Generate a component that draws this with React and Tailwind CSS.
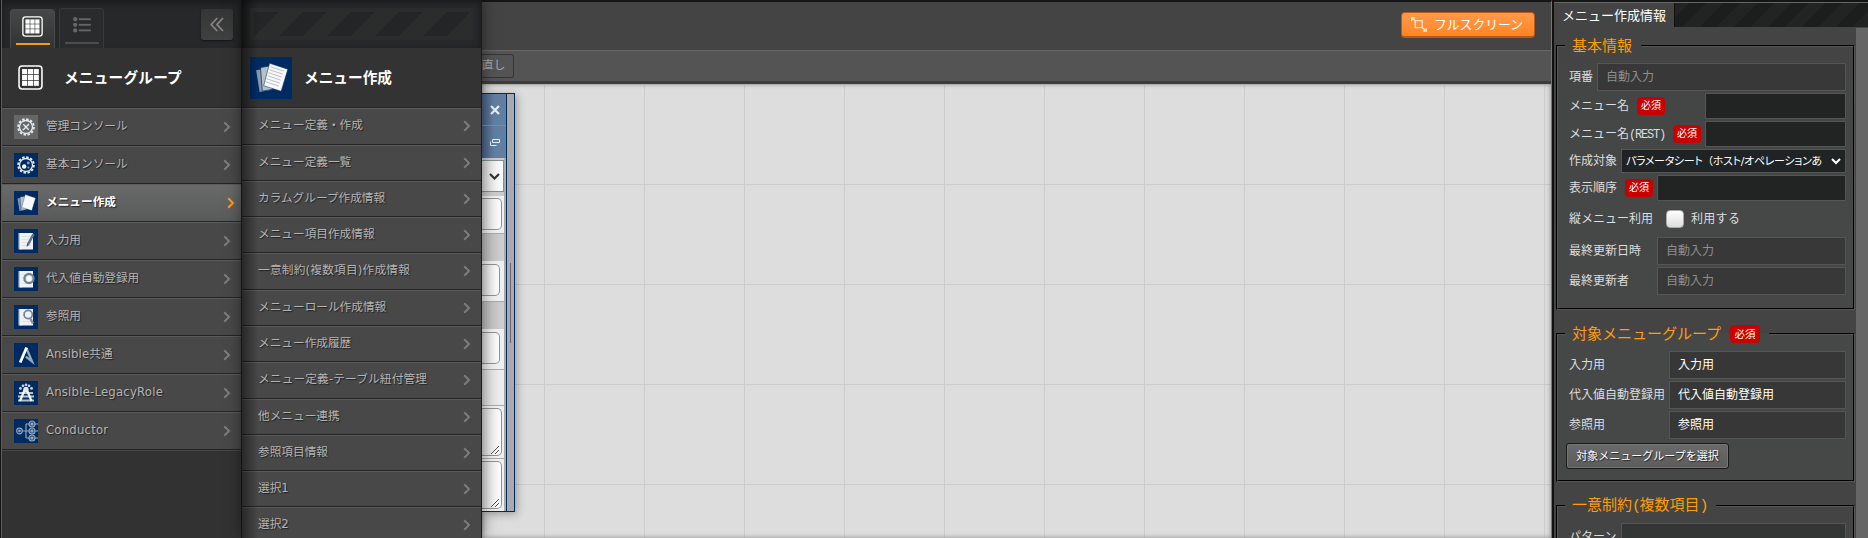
import React from "react";

const NAVY = "#002b62";

function GridIcon({ size }) {
  return (
    <svg width={size} height={size} viewBox="0 0 24 24" fill="none">
      <rect x="1" y="1" width="22" height="22" rx="3" stroke="#fff" strokeWidth="1.5" />
      <g fill="#fff">
        {[3.9, 9.5, 15.1].map((y) =>
          [3.9, 9.5, 15.1].map((x) => <rect key={`${x}-${y}`} x={x} y={y} width="4.9" height="4.9" />)
        )}
      </g>
    </svg>
  );
}

function ListIcon() {
  return (
    <svg width="18" height="16" viewBox="0 0 18 16" className="text-[#666768]">
      {[2.2, 7.8, 13.4].map((y) => (
        <g key={y} fill="currentColor">
          <circle cx="2.2" cy={y} r="2.1" />
          <rect x="5.8" y={y - 0.9} width="12" height="1.8" />
        </g>
      ))}
    </svg>
  );
}

function Chevron({ className }) {
  return (
    <svg width="8" height="12" viewBox="0 0 8 12" fill="none" stroke="currentColor" strokeWidth="2" className={className}>
      <path d="M1.2 1.2 6 6 1.2 10.8" />
    </svg>
  );
}

function Gear({ children }) {
  return (
    <>
      <circle cx="12" cy="12" r="7.8" fill="none" stroke="#e6ebef" strokeWidth="2" strokeDasharray="2.45 1.63" />
      <circle cx="12" cy="12" r="6.5" fill="none" stroke="#e6ebef" strokeWidth="1.3" />
      {children}
    </>
  );
}

function Sheet() {
  return (
    <>
      <rect x="4.5" y="4" width="3" height="16.5" fill="#c3ccd3" />
      <rect x="6" y="4" width="13" height="16.5" fill="#f0f3f5" />
      <path d="M8 7.5h9M8 10.5h9M8 13.5h9M8 16.5h9" stroke="#d5dade" strokeWidth="0.7" />
    </>
  );
}

function Pages() {
  return (
    <>
      <path d="M3.5 7.5 9 6.5 11 19 5.5 20Z" fill="#8698a9" />
      <path d="M6 6 12 5 13 18.5 7 19.5Z" fill="#b5c0ca" stroke={NAVY} strokeWidth="0.4" />
      <path d="M11.2 3.6 21.6 7 17.8 19.6 7.8 16.4Z" fill="#f7f8f9" stroke={NAVY} strokeWidth="0.3" />
    </>
  );
}

const glyphs = {
  admin: (
    <Gear>
      <path d="M8.8 15.2 15 9M9.3 9.3l5.4 5.4" stroke="#e6ebef" strokeWidth="1.4" />
    </Gear>
  ),
  base: (
    <Gear>
      <circle cx="10.2" cy="13.5" r="2.2" fill="#fff" />
      <circle cx="14.3" cy="10" r="1.4" fill="#8fa3b6" />
      <circle cx="14.4" cy="14.5" r="1" fill="#8fa3b6" />
    </Gear>
  ),
  pages: <Pages />,
  input: (
    <>
      <Sheet />
      <path d="M19.6 5 14 15.5" stroke="#5b7687" strokeWidth="2.6" />
      <path d="m13 14.6 2.2 1.2L12.6 18Z" fill="#425c70" />
    </>
  ),
  assign: (
    <>
      <Sheet />
      <circle cx="15" cy="11.5" r="4.6" fill="#d3dbe0" stroke="#6d8695" strokeWidth="2.2" />
      <circle cx="15" cy="11.5" r="2.6" fill="#fff" />
    </>
  ),
  refer: (
    <>
      <Sheet />
      <circle cx="14.2" cy="9.5" r="4.1" fill="#eef2f4" stroke="#6d8695" strokeWidth="1.7" />
      <path d="m16 13 3 5.5" stroke="#7f95a2" strokeWidth="2.4" />
    </>
  ),
  ansible: (
    <>
      <path d="M12.4 5.2 18 18.4 11.8 13.6" fill="none" stroke="#96a9ba" strokeWidth="2.3" />
      <path d="M12.6 4.5 6.2 19.5" stroke="#fff" strokeWidth="2.8" />
    </>
  ),
  legacy: (
    <>
      <g fill="#c9d4dc">
        <circle cx="6.4" cy="7.4" r="1.4" /><circle cx="9" cy="4.8" r="1.4" /><circle cx="12" cy="3.8" r="1.3" />
        <circle cx="15" cy="4.8" r="1.4" /><circle cx="17.6" cy="7.4" r="1.4" />
      </g>
      <path d="M5 12h14M4 15.5h16M4 19.5h16" stroke="#b4c2cd" strokeWidth="1.8" />
      <path d="M11 8 6 20M12.5 8l5 12" fill="none" stroke="#f4f6f8" strokeWidth="2.2" />
      <circle cx="12" cy="8.4" r="2.6" fill="#e6ebef" />
    </>
  ),
  conductor: (
    <g fill="none" stroke="#8fa6bb" strokeWidth="1.2">
      <circle cx="5.5" cy="12" r="2.8" />
      <circle cx="5.5" cy="12" r="0.8" />
      <path d="M8.3 12h15.7M12 5v14M12 5h12M12 19h12" />
      {[5, 12, 19].map((y) => (
        <g key={y}>
          <circle cx="18" cy={y} r="3" fill="#2c507b" />
          <circle cx="18" cy={y} r="1" fill="#c4d0db" />
        </g>
      ))}
    </g>
  ),
};

function MenuIcon({ name }) {
  return (
    <svg width="24" height="24" viewBox="0 0 24 24" className={name === "admin" ? "bg-[#666]" : "bg-[#002b62]"}>
      {glyphs[name]}
    </svg>
  );
}

const groups = [
  ["admin", "管理コンソール", ""],
  ["base", "基本コンソール", ""],
  ["pages", "メニュー作成", "font-bold"],
  ["input", "入力用", ""],
  ["assign", "代入値自動登録用", ""],
  ["refer", "参照用", ""],
  ["ansible", "Ansible共通", "tracking-[0.1px]"],
  ["legacy", "Ansible-LegacyRole", "tracking-[0.22px]"],
  ["conductor", "Conductor", "tracking-[0.22px]"],
];

const menus = [
  ["メニュー定義・作成", "h-[37px]"],
  ["メニュー定義一覧", "h-[36px]"],
  ["カラムグループ作成情報", "h-[36px]"],
  ["メニュー項目作成情報", "h-[36px]"],
  ["一意制約(複数項目)作成情報", "h-[37px] tracking-[0.22px]"],
  ["メニューロール作成情報", "h-[36px]"],
  ["メニュー作成履歴", "h-[36px]"],
  ["メニュー定義-テーブル紐付管理", "h-[37px] tracking-[0.16px]"],
  ["他メニュー連携", "h-[36px]"],
  ["参照項目情報", "h-[36px]"],
  ["選択1", "h-[36px]"],
  ["選択2", "h-[36px]"],
];

function GroupPanel() {
  return (
    <nav className="flex h-full w-[242px] shrink-0 flex-col border-r border-[#1b1b1b] bg-[#323232]">
      <div className="flex h-full flex-col border-l border-[#151515]">
        <div className="flex h-full flex-col border-l border-[#5c5c5c]">
          <div className="flex h-12 shrink-0 items-end bg-[#262829] pl-2 pr-2 shadow-[inset_0_4px_6px_rgba(0,0,0,0.3)]">
            <div className="flex h-[39px] w-[45px] flex-col items-center rounded-t border border-b-0 border-[#4a4a4a] bg-linear-to-b from-[#464748] to-[#333] pt-[6px]">
              <GridIcon size={21} />
              <div className="mt-[6px] h-[2px] w-[34px] bg-[#f39a27]" />
            </div>
            <div className="ml-1 flex h-10 w-[45px] flex-col items-center rounded-t border border-b-0 border-[#38393a] bg-[#2a2b2c] pt-2">
              <ListIcon />
              <div className="mt-[9px] h-[2px] w-[34px] bg-[#4b4c4d]" />
            </div>
            <div className="mb-2 ml-auto flex h-[31px] w-8 items-center justify-center rounded-[3px] bg-linear-to-b from-[#343536] to-[#414141] shadow-[0_1px_2px_rgba(0,0,0,0.5)]">
              <svg width="14" height="15" viewBox="0 0 14 15" fill="none" stroke="#858585" strokeWidth="1.8">
                <path d="M7.2 1 1.2 7.5l6 6.5M13 1 7 7.5l6 6.5" />
              </svg>
            </div>
          </div>
          <div className="flex h-[59px] shrink-0 items-center pl-[16px]">
            <GridIcon size={25} />
            <span className="ml-[21px] text-[14.67px] font-bold tracking-[0.2px] text-white">メニューグループ</span>
          </div>
          {groups.map(([icon, label, text]) => {
            const active = icon === "pages";
            return (
              <div
                key={label}
                className={
                  "flex h-[38px] shrink-0 items-center border-t border-[#252525] pl-3 shadow-[inset_0_1px_0_#5b5b5b] " +
                  (active ? "bg-linear-to-b from-[#6a6a6a] to-[#585a59] pr-[6px] text-white" : "bg-[#484848] pr-[10px] text-[#b4b4b4]")
                }
              >
                <MenuIcon name={icon} />
                <span className={"ml-2 flex-1 whitespace-nowrap text-[11.67px] leading-none [text-shadow:1px_1px_1px_#222] " + text}>{label}</span>
                <Chevron className={active ? "text-[#ff9c14]" : "text-[#7c7c7c]"} />
              </div>
            );
          })}
          <div className="h-px shrink-0 bg-[#222]" />
          <div className="h-px shrink-0 bg-[#484848]" />
        </div>
      </div>
    </nav>
  );
}

function MenuPanel() {
  return (
    <nav className="relative z-10 flex h-full w-[240px] shrink-0 flex-col overflow-hidden border-r border-[#1b1b1b] bg-[#333] shadow-[0_0_14px_rgba(0,0,0,0.5)]">
      <div className="h-12 shrink-0 bg-[#262829] pl-2 pt-2 shadow-[inset_0_2px_6px_rgba(0,0,0,0.4)]">
        <div className="h-8 w-[223px] bg-[#2b2d2d] p-1">
          <div className="h-6 bg-[repeating-linear-gradient(135deg,#232526_0_17px,#2b2d2d_17px_34px)]" />
        </div>
      </div>
      <div className="flex h-[59px] shrink-0 items-center pl-2">
        <svg width="42" height="42" viewBox="0 0 24 24" className="bg-[#002b62]">
          <Pages />
          <path d="m11.8 5.6 7.6 2.5m-8.2-.8 7.6 2.5m-8.2-.8 7.6 2.5m-8.2-.8 7.6 2.5m-8.2-.8 7.6 2.5m-8.2-.8 7.6 2.5" stroke="#a4a8ac" strokeWidth="0.4" />
        </svg>
        <span className="ml-3 text-[14.67px] font-bold text-white">メニュー作成</span>
      </div>
      {menus.map(([label, look]) => (
        <div
          key={label}
          className={"flex shrink-0 items-center border-t border-[#252525] bg-[#484848] pl-4 pr-[10px] text-[#b4b4b4] shadow-[inset_0_1px_0_#5b5b5b] " + look}
        >
          <span className="flex-1 whitespace-nowrap text-[11.67px] leading-none [text-shadow:1px_1px_1px_#222]">{label}</span>
          <Chevron className="text-[#7c7c7c]" />
        </div>
      ))}
      <div className="pointer-events-none absolute inset-y-0 left-0 w-4 bg-linear-to-r from-black/45 to-transparent" />
    </nav>
  );
}

function Resizer() {
  return (
    <svg width="9" height="9" viewBox="0 0 9 9" stroke="#555" strokeWidth="1">
      <path d="M0 9 8 1M4 9l4-4" />
    </svg>
  );
}

function TableWindow() {
  return (
    <div className="mt-[9px] flex h-[419px] w-[33px] border-y border-r border-[#002b62] bg-[#aaa] shadow-[2px_2px_8px_rgba(0,0,0,0.3)]">
      <div className="flex w-6 flex-col bg-[#f0f0f0]">
        <div className="flex h-8 shrink-0 items-center border-b border-[#7590ad] bg-linear-to-r from-[#4c6389] to-[#6180a2] to-50% pl-2">
          <svg width="10" height="10" viewBox="0 0 10 10" stroke="#e8eef3" strokeWidth="2.2"><path d="m1 1 8 8M9 1 1 9" /></svg>
        </div>
        <div className="flex h-8 shrink-0 items-center bg-linear-to-r from-[#4c6389] to-[#6180a2] to-50% pl-2">
          <svg width="10" height="7" viewBox="0 0 10 7" fill="none" stroke="#e8eef3"><path d="M2.5.5h7v3h-7zM.5 2.5v4h6" /></svg>
        </div>
        <div className="flex h-[38px] shrink-0 border-r-2 border-[#aaa] bg-[#ccc] pt-[2px]">
          <div className="flex h-8 w-[22px] items-center border border-l-0 border-[#858f8f] bg-linear-to-r from-[#ddd] to-white pl-[7px]">
            <svg width="11" height="7" viewBox="0 0 11 7" fill="none" stroke="#333" strokeWidth="2.2"><path d="m1 1 4.5 4.5L10 1" /></svg>
          </div>
        </div>
        <div className="flex h-[37px] shrink-0 border-r-2 border-[#aaa] pt-[2px]">
          <div className="h-8 w-5 rounded-r-[5px] border border-l-0 border-[#8e9394] bg-linear-to-r from-[#ddd] to-white" />
        </div>
        <div className="h-7 shrink-0 border-r-2 border-t border-[#aaa] bg-linear-to-r from-[#bbb] to-[#d0d0d0]" />
        <div className="h-10 shrink-0 border-r-2 border-[#aaa] pt-[3px]">
          <div className="h-8 w-[18px] rounded-r-[5px] border border-l-0 border-[#8e9394] bg-linear-to-r from-[#ddd] to-white" />
        </div>
        <div className="h-7 shrink-0 border-r-2 border-t border-[#aaa] bg-linear-to-r from-[#bbb] to-[#d0d0d0]" />
        <div className="h-10 shrink-0 border-r-2 border-[#aaa] pt-[3px]">
          <div className="h-8 w-[18px] rounded-r-[5px] border border-l-0 border-[#8e9394] bg-linear-to-r from-[#ddd] to-white" />
        </div>
        <div className="h-9 shrink-0 border-r-2 border-t border-[#aaa] bg-linear-to-r from-[#ddd] to-[#f0f0f0]" />
        <div className="h-[53px] shrink-0 border-r-2 border-t border-[#aaa] pt-[2px]">
          <div className="flex h-12 w-5 items-end justify-end rounded-r-[5px] border border-l-0 border-[#8e9394] bg-linear-to-r from-[#ddd] to-white pb-px pr-px"><Resizer /></div>
        </div>
        <div className="flex-1 border-r-2 border-t border-[#aaa] pt-[2px]">
          <div className="flex h-12 w-5 items-end justify-end rounded-r-[5px] border border-l-0 border-[#8e9394] bg-linear-to-r from-[#ddd] to-white pb-px pr-px"><Resizer /></div>
        </div>
      </div>
      <div className="flex-1 border-l border-[#002b62] pl-[3px] pt-[169px]">
        <div className="h-20 w-px bg-[#666]" />
      </div>
    </div>
  );
}

function Editor() {
  return (
    <main className="flex h-full min-w-0 flex-1 flex-col border-t-2 border-[#151515] bg-[#444]">
      <div className="flex h-12 shrink-0 justify-end pr-4 pt-[10px]">
        <button className="flex h-[26px] w-[134px] items-center rounded-sm border border-b-2 border-[#b8591b] bg-linear-to-b from-[#ff9a48] to-[#ff8420] pl-[9px] text-white">
          <svg width="16" height="15" viewBox="0 0 16 15" fill="none" stroke="#ffe3c8" strokeWidth="1.3">
            <path d="M4.2 3.7h7v7h-7zM.7 4.2V.8h3.5M1 1l3.2 2.8M15.3 10.8v3.4h-3.5M15 14l-3.5-3.2" />
          </svg>
          <span className="ml-[7px] whitespace-nowrap text-[12.8px]">フルスクリーン</span>
        </button>
      </div>
      <div className="flex h-[34px] shrink-0 border-b-[3px] border-t border-b-[#3c3c3c] border-t-[#686868] bg-[#545454] pt-[3px]">
        <div className="flex h-6 w-8 items-center rounded-r-[3px] border border-l-0 border-[#353535] text-[11.67px] text-[#aaa]">直し</div>
      </div>
      <div className="flex-1 bg-[#ddd] bg-[linear-gradient(#ccc_1px,transparent_1px),linear-gradient(90deg,#ccc_1px,transparent_1px)] bg-[size:100px_100px] bg-[position:0_0,62px_0] shadow-[inset_0_0_5px_#888]">
        <TableWindow />
      </div>
    </main>
  );
}

function Badge() {
  return (
    <span className="ml-2 inline-flex h-[18px] w-7 shrink-0 items-center justify-center rounded bg-[#c80000] text-[10px] leading-none tracking-normal text-white">
      必須
    </span>
  );
}

function Row({ label, required, height, children }) {
  return (
    <div className={"flex shrink-0 items-center pl-1 text-[12px] text-[#ddd] " + height}>
      <span className="whitespace-nowrap leading-none">{label}</span>
      {required && <Badge />}
      {children}
    </div>
  );
}

function Field({ width, value, tone }) {
  return (
    <div className={"ml-auto flex h-full shrink-0 items-center border border-[#555] pl-2 leading-none " + width + " " + tone}>{value}</div>
  );
}

const AUTO = "bg-[#383838] text-[#8b8f90]";
const DARK = "bg-[#222424]";
const VALUE = "bg-[#373737] text-white";

function Section({ title, required, className, children }) {
  return (
    <fieldset className={"m-0 ml-[2px] w-[299px] shrink-0 border-2 border-[#555] px-[7px] pt-[6px] [border-style:groove] " + className}>
      <legend className="flex h-[22px] items-center pl-[7px] pr-[9px] text-[15px] leading-none text-[#ff9c0b]">
        <span className="whitespace-nowrap">{title}</span>
        {required && (
          <span className="ml-[9px] flex h-[18px] w-[30px] items-center justify-center rounded bg-[#c80000] text-[10.5px] leading-none text-white">必須</span>
        )}
      </legend>
      <div className="flex flex-col gap-[2px]">{children}</div>
    </fieldset>
  );
}

function Paren({ children }) {
  return <span className="font-['Liberation_Mono',monospace] tracking-[-1.5px]">{children}</span>;
}

function InfoPanel() {
  return (
    <aside className="flex h-full w-[317px] shrink-0 flex-col border-l border-t-2 border-l-[#777] border-t-[#151515] bg-[#444]">
      <div className="flex h-full flex-col border-l-2 border-[#111]">
        <div className="flex h-[25px] shrink-0 border-t border-[#666] bg-[repeating-linear-gradient(135deg,#1c1e1e_0_12px,#222424_12px_24px)]">
          <div className="flex w-[121px] items-center border-r border-[#111] bg-[#444] pl-[8px] text-[13px] leading-none text-white">
            <span className="whitespace-nowrap">メニュー作成情報</span>
          </div>
        </div>
        <div className="flex min-h-0 flex-1 overflow-hidden">
          <div className="flex w-[301px] shrink-0 flex-col gap-[13px] pt-2">
            <Section title="基本情報" className="h-[275px] bg-linear-to-b from-[#444] via-[#454747] to-[#474747]">
              <Row label="項番" height="h-7"><Field width="w-[249px]" tone={AUTO} value="自動入力" /></Row>
              <Row label="メニュー名" required height="h-[26px]"><Field width="w-[141px]" tone={DARK} /></Row>
              <Row
                label={<>メニュー名<span className="font-['Liberation_Mono',monospace] tracking-[-1.2px]">(REST)</span></>}
                required
                height="h-[26px]"
              >
                <Field width="w-[141px]" tone={DARK} />
              </Row>
              <Row label="作成対象" height="h-6">
                <div className="ml-auto flex h-full w-[225px] items-center border border-[#555] bg-[#202323] pl-1 pr-[4px] text-white">
                  <span className="flex-1 overflow-hidden whitespace-nowrap text-[11px] leading-none tracking-[-0.33px] [font-feature-settings:'palt']">
                    パラメータシート<span className="pl-[5px]">（</span>ホスト/オペレーションあ
                  </span>
                  <svg width="10" height="7" viewBox="0 0 10 7" fill="none" stroke="#fff" strokeWidth="2"><path d="m1 1 4 4 4-4" /></svg>
                </div>
              </Row>
              <Row label="表示順序" required height="h-[26px]"><Field width="w-[189px]" tone={DARK} /></Row>
              <Row label="縦メニュー利用" height="h-8">
                <span className="ml-[13px] h-[18px] w-[18px] rounded border border-[#aaa] bg-linear-to-b from-white to-[#ddd]" />
                <span className="ml-[7px] leading-none tracking-[0.3px]">利用する</span>
              </Row>
              <Row label="最終更新日時" height="h-7"><Field width="w-[189px]" tone={AUTO} value="自動入力" /></Row>
              <Row label="最終更新者" height="h-7"><Field width="w-[189px]" tone={AUTO} value="自動入力" /></Row>
            </Section>
            <Section title="対象メニューグループ" required className="h-[159px] bg-[#464747]">
              <Row label="入力用" height="h-7"><Field width="w-[177px]" tone={VALUE} value="入力用" /></Row>
              <Row label="代入値自動登録用" height="h-7"><Field width="w-[177px]" tone={VALUE} value="代入値自動登録用" /></Row>
              <Row label="参照用" height="h-7"><Field width="w-[177px]" tone={VALUE} value="参照用" /></Row>
              <button className="ml-px mt-[2px] flex h-[26px] w-[163px] items-center justify-center whitespace-nowrap rounded-[3px] border border-[#1a1a1a] bg-linear-to-b from-[#6a6a6a] to-[#5c5c5c] text-[11px] leading-none text-white shadow-[inset_0_0_0_1px_#757575] [text-shadow:1px_1px_1px_#222]">
                対象メニューグループを選択
              </button>
            </Section>
            <Section title={<>一意制約<Paren>(</Paren>複数項目<Paren>)</Paren></>} className="h-[100px] bg-[#444]">
              <Row label="パターン" height="h-7"><Field width="w-[225px]" tone="bg-[#343636]" /></Row>
            </Section>
          </div>
          <div className="ml-px mt-px flex-1 bg-[#666]" />
        </div>
      </div>
    </aside>
  );
}

export default function App() {
  return (
    <div className="flex h-[538px] w-[1868px] overflow-hidden bg-[#444] font-['DejaVu_Sans','Noto_Sans_CJK_JP',sans-serif]">
      <GroupPanel />
      <MenuPanel />
      <Editor />
      <InfoPanel />
    </div>
  );
}
